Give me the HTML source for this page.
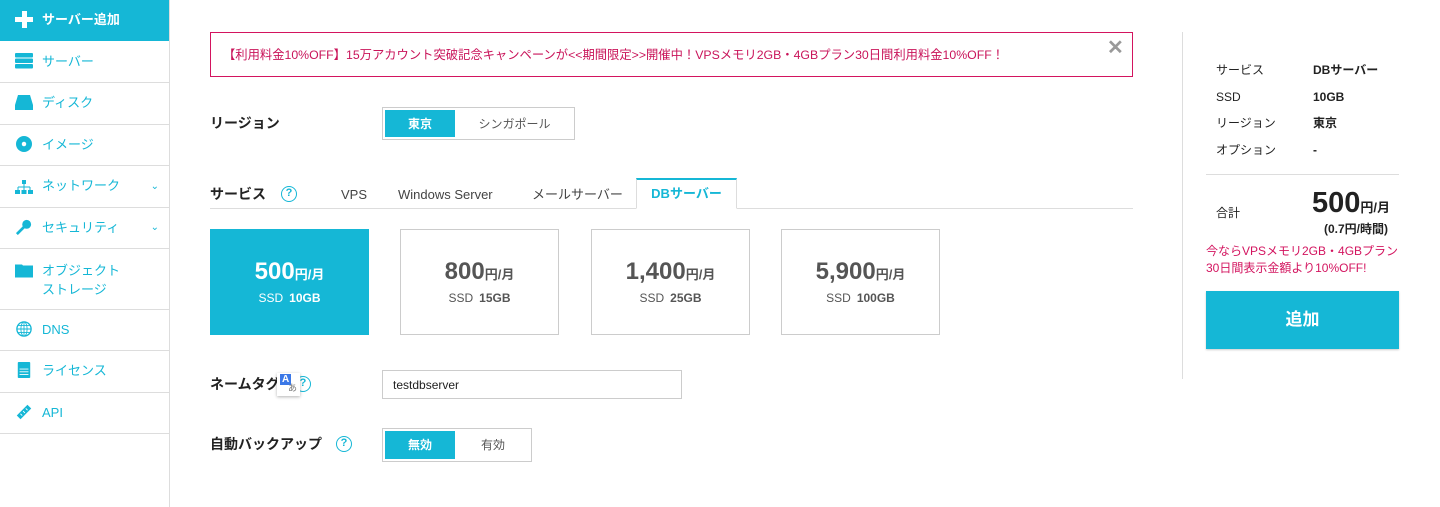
<!DOCTYPE html>
<html><head><meta charset="utf-8"><style>
*{box-sizing:border-box;margin:0;padding:0}
body{width:1440px;height:507px;background:#fff;font-family:"Liberation Sans","Noto Sans CJK JP",sans-serif;color:#333;position:relative;overflow:hidden;font-size:13px;line-height:16px}
.a{position:absolute}
.side{left:0;top:0;width:170px;height:507px;border-right:1px solid #ddd}
.nav{position:absolute;left:0;width:169px;border-bottom:1px solid #ddd;color:#15b7d6;font-size:13px}
.nav .ic{position:absolute;left:15px;width:18px;height:16px}
.nav .t{position:absolute;left:42px}
.chev{position:absolute;right:10px;font-size:10px}
.cy{background:#15b7d6}
.lab{font-weight:bold;font-size:14px;color:#222}
.tog{border:1px solid #ccc;background:#fff}
.on,.off{position:absolute;display:flex;align-items:center;justify-content:center;font-size:12px}
.on{top:2px;left:2px;bottom:2px;background:#15b7d6;color:#fff;font-weight:bold}
.off{top:0;bottom:0;color:#555}
.card{border:1px solid #ccc;width:159px;height:106px;text-align:center;color:#555}
.card .p{margin-top:27px;font-size:24px;line-height:30px;font-weight:bold}
.card .p small{font-size:13px}
.card .s{margin-top:0;font-size:12px}
.card .s b{margin-left:6px}
.q{width:16px;height:16px;border:1.5px solid #15b7d6;border-radius:50%;color:#15b7d6;font-size:11px;text-align:center;line-height:13px;font-weight:bold}
.sum{font-size:12px;color:#222}
</style></head><body>
<div class="a side"></div>
<div class="nav cy" style="top:0;height:41px;color:#fff;font-weight:bold;border:none">
 <span class="a" style="left:15px;top:17px;width:18px;height:5px;background:#fff"></span>
 <span class="a" style="left:21.5px;top:11px;width:5px;height:17px;background:#fff"></span>
 <span class="t" style="top:12px">サーバー追加</span></div>
<div class="nav" style="top:41px;height:42px"><svg class="ic" style="top:12px" viewBox="0 0 18 16"><rect y="0" width="18" height="4.5" rx="1" fill="#15b7d6"/><rect y="5.5" width="18" height="4.5" rx="1" fill="#15b7d6"/><rect y="11" width="18" height="4.5" rx="1" fill="#15b7d6"/></svg><span class="t" style="top:13px">サーバー</span></div>
<div class="nav" style="top:83px;height:42px"><svg class="ic" style="top:12px" viewBox="0 0 18 16"><path d="M3 0h12l3 10v5H0v-5z" fill="#15b7d6"/></svg><span class="t" style="top:12px">ディスク</span></div>
<div class="nav" style="top:125px;height:41px"><svg class="ic" style="top:11px" viewBox="0 0 18 18"><circle cx="9" cy="9" r="9" fill="#15b7d6"/><circle cx="9" cy="9" r="2.5" fill="#fff"/></svg><span class="t" style="top:12px">イメージ</span></div>
<div class="nav" style="top:166px;height:42px"><svg class="ic" style="top:13px" viewBox="0 0 18 14"><rect x="7" y="0" width="4" height="4" fill="#15b7d6"/><path d="M9 4v3M3 7h12M3 7v3M9 7v3M15 7v3" stroke="#15b7d6"/><rect x="0" y="10" width="5" height="4" fill="#15b7d6"/><rect x="6.5" y="10" width="5" height="4" fill="#15b7d6"/><rect x="13" y="10" width="5" height="4" fill="#15b7d6"/></svg><span class="t" style="top:12px">ネットワーク</span><span class="chev" style="top:13px">&#8964;</span></div>
<div class="nav" style="top:208px;height:41px"><svg class="ic" style="top:11px" viewBox="0 0 18 18"><circle cx="12" cy="6" r="5" fill="#15b7d6"/><path d="M9 9L1 17" stroke="#15b7d6" stroke-width="3"/></svg><span class="t" style="top:12px">セキュリティ</span><span class="chev" style="top:12px">&#8964;</span></div>
<div class="nav" style="top:249px;height:61px"><svg class="ic" style="top:13px" viewBox="0 0 18 15"><path d="M0 2h7l1 1h10v12H0z" fill="#15b7d6"/></svg><span class="t" style="top:12px;line-height:19px">オブジェクト<br>ストレージ</span></div>
<div class="nav" style="top:310px;height:41px"><svg class="ic" style="top:11px" viewBox="0 0 18 18"><circle cx="9" cy="9" r="8" fill="none" stroke="#15b7d6" stroke-width="1.5"/><ellipse cx="9" cy="9" rx="3.5" ry="8" fill="none" stroke="#15b7d6"/><path d="M1 9h16M2 5h14M2 13h14M9 1v16" stroke="#15b7d6"/></svg><span class="t" style="top:12px">DNS</span></div>
<div class="nav" style="top:351px;height:42px"><svg class="ic" style="top:11px" viewBox="0 0 16 18"><rect x="1" y="0" width="14" height="18" rx="1" fill="#15b7d6"/><path d="M3 8h10M3 11h10M3 14h10" stroke="#fff"/></svg><span class="t" style="top:12px">ライセンス</span></div>
<div class="nav" style="top:393px;height:41px"><svg class="ic" style="top:11px" viewBox="0 0 18 18"><path d="M3 15L15 3" stroke="#15b7d6" stroke-width="6"/><path d="M5 11l2 2M8 8l2 2M11 5l2 2" stroke="#fff"/></svg><span class="t" style="top:12px">API</span></div>

<div class="a" style="left:210px;top:32px;width:923px;height:45px;border:1px solid #d3145f;color:#c9145a;font-size:12.3px;padding:14px 0 0 12px">【利用料金10%OFF】15万アカウント突破記念キャンペーンが&lt;&lt;期間限定&gt;&gt;開催中！VPSメモリ2GB・4GBプラン30日間利用料金10%OFF！</div>
<div class="a" style="left:1107px;top:40px;color:#999;font-size:20px;font-weight:bold">✕</div>

<div class="a lab" style="left:210px;top:115px">リージョン</div>
<div class="a tog" style="left:382px;top:107px;width:193px;height:33px"><div class="on" style="width:70px">東京</div><div class="off" style="left:72px;width:119px">シンガポール</div></div>

<div class="a lab" style="left:210px;top:186px">サービス</div>
<div class="a q" style="left:281px;top:186px">?</div>
<div class="a" style="left:210px;top:208px;width:923px;border-top:1px solid #ddd"></div>
<div class="a" style="left:341px;top:187px;font-size:13px;color:#444">VPS</div>
<div class="a" style="left:398px;top:187px;font-size:13px;color:#444">Windows Server</div>
<div class="a" style="left:532px;top:187px;font-size:13px;color:#444;line-height:16px">メールサーバー</div>
<div class="a" style="left:636px;top:178px;width:101px;height:31px;border:1px solid #ddd;border-top:2px solid #15b7d6;border-bottom:1px solid #fff;background:#fff;color:#15b7d6;font-weight:bold;font-size:13px;display:flex;align-items:center;justify-content:center">DBサーバー</div>

<div class="a card" style="left:210px;top:229px;background:#15b7d6;border-color:#15b7d6;color:#fff"><div class="p">500<small>円/月</small></div><div class="s">SSD<b>10GB</b></div></div>
<div class="a card" style="left:400px;top:229px"><div class="p">800<small>円/月</small></div><div class="s">SSD<b>15GB</b></div></div>
<div class="a card" style="left:591px;top:229px"><div class="p">1,400<small>円/月</small></div><div class="s">SSD<b>25GB</b></div></div>
<div class="a card" style="left:781px;top:229px"><div class="p">5,900<small>円/月</small></div><div class="s">SSD<b>100GB</b></div></div>

<div class="a lab" style="left:210px;top:376px">ネームタグ</div>
<div class="a q" style="left:295px;top:376px">?</div>
<div class="a" style="left:277px;top:373px;width:23px;height:23px;background:#fff;box-shadow:0 1px 3px rgba(0,0,0,.3);font-size:10px;line-height:11px"><span style="position:absolute;left:3px;top:1px;color:#fff;background:#3b78e7;padding:0 2px;font-weight:bold">A</span><span style="position:absolute;left:11px;top:10px;color:#777;font-size:9px">あ</span></div>
<div class="a" style="left:382px;top:370px;width:300px;height:29px;border:1px solid #ccc;font-size:12px;color:#222;padding:6px 0 0 10px">testdbserver</div>

<div class="a lab" style="left:210px;top:436px">自動バックアップ</div>
<div class="a q" style="left:336px;top:436px">?</div>
<div class="a tog" style="left:382px;top:428px;width:150px;height:34px"><div class="on" style="width:70px">無効</div><div class="off" style="left:72px;width:76px">有効</div></div>

<div class="a" style="left:1182px;top:32px;height:347px;border-left:1px solid #ddd"></div>
<div class="a sum" style="left:1216px;top:57px;line-height:26.7px">サービス<br>SSD<br>リージョン<br>オプション</div>
<div class="a sum" style="left:1313px;top:57px;line-height:26.7px;font-weight:bold">DBサーバー<br>10GB<br>東京<br>-</div>
<div class="a" style="left:1206px;top:174px;width:193px;border-top:1px solid #ddd"></div>
<div class="a sum" style="left:1216px;top:205px">合計</div>
<div class="a" style="left:1240px;top:186px;width:150px;text-align:right;font-weight:bold;color:#222;font-size:29px;line-height:34px">500<span style="font-size:13px">円/月</span></div>
<div class="a" style="left:1240px;top:221px;width:148px;text-align:right;font-weight:bold;color:#222;font-size:12px">(0.7円/時間)</div>
<div class="a" style="left:1206px;top:243px;width:200px;color:#d3145f;font-size:12px;line-height:17px">今ならVPSメモリ2GB・4GBプラン30日間表示金額より10%OFF!</div>
<div class="a cy" style="left:1206px;top:291px;width:193px;height:58px;color:#fff;font-weight:bold;font-size:17px;display:flex;align-items:center;justify-content:center;box-shadow:0 1px 2px rgba(0,0,0,.2)">追加</div>
</body></html>
